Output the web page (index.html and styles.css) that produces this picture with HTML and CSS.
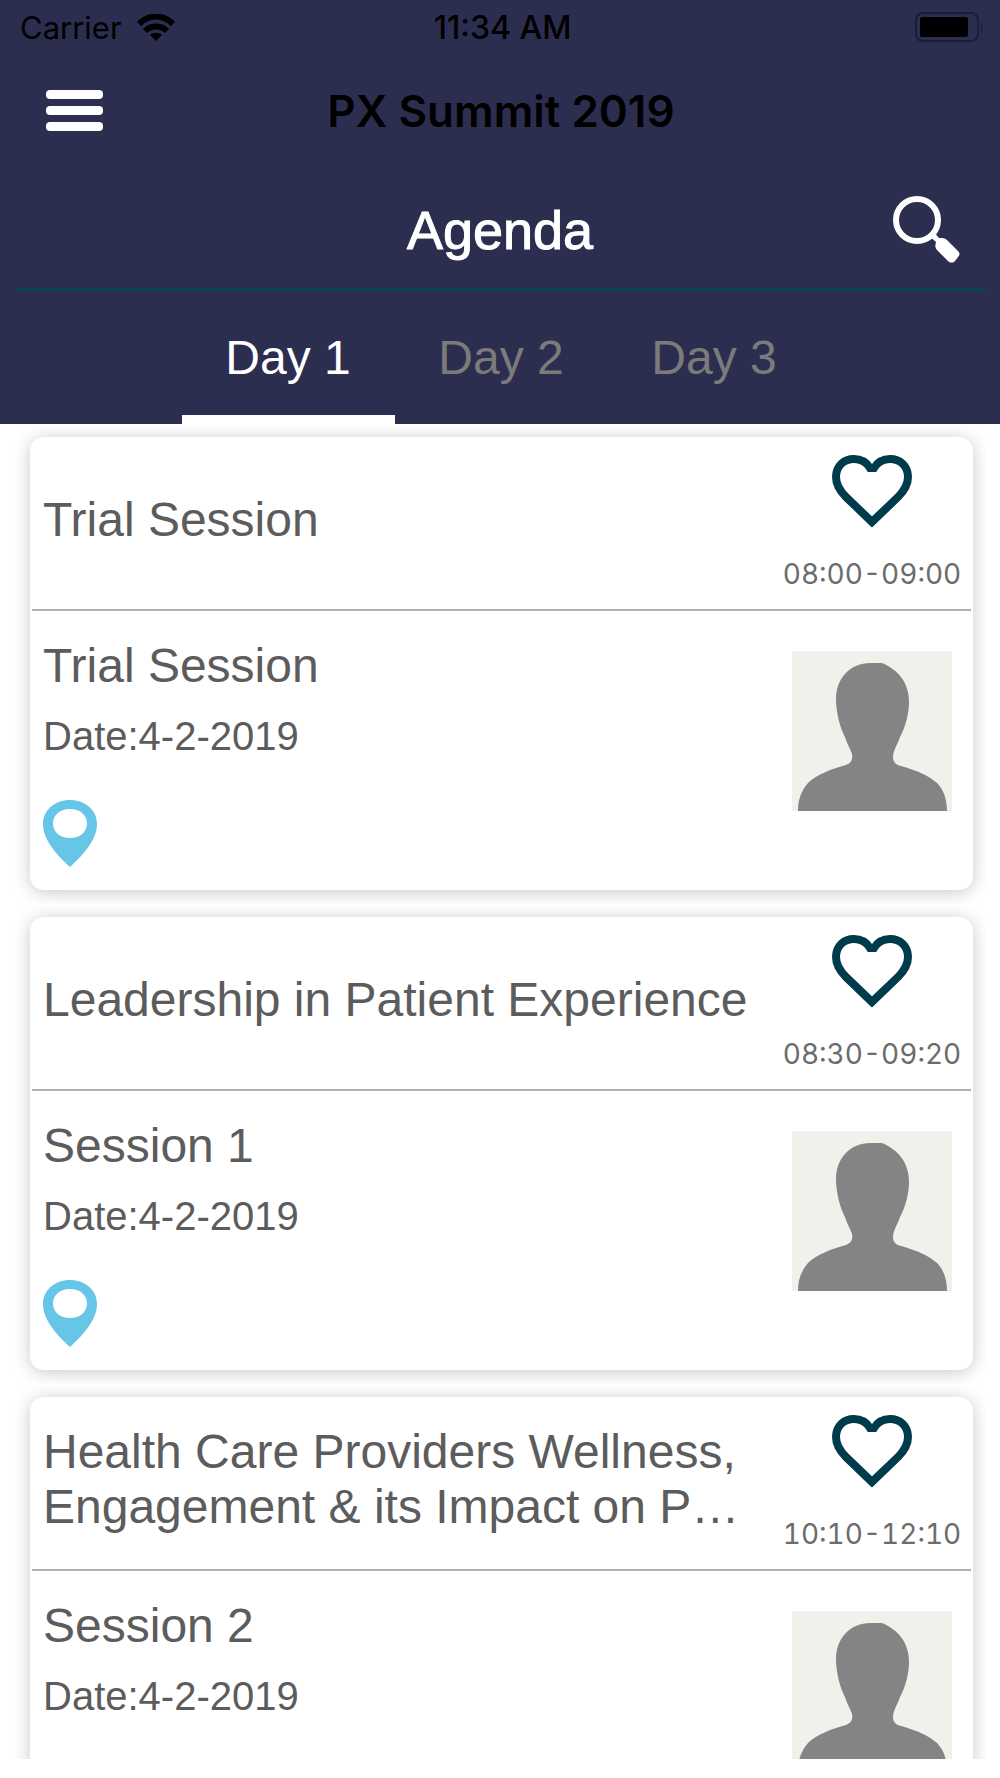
FILE: index.html
```html
<!DOCTYPE html>
<html lang="en">

<head>
    <meta charset="utf-8">
    <meta name="viewport" content="width=device-width, initial-scale=1">
    <title>PX Summit 2019</title>
    <link rel="stylesheet" href="styles.css">
</head>

<body>

    <!-- shapes shared by every session -->
    <svg class="shapes" aria-hidden="true">
        <symbol id="heart" viewBox="0 0 80 73">
            <path d="M40 67 L14 42 C7 35 4 29 4 22 C4 11 12 4 22 4 C30 4 35 8 38 13 L42 13 C45 8 50 4 58 4 C68 4 76 11 76 22 C76 29 73 35 66 42 Z" fill="none" stroke="#003a4d" stroke-width="8"/>
        </symbol>
        <symbol id="pin" viewBox="0 0 54 67">
            <path fill-rule="evenodd" d="M27 0 C42 0 54 10 54 24 C54 40 40 55 27 67 C14 55 0 40 0 24 C0 10 12 0 27 0 Z M27 9 C17 9 10 15 10 23.500 C10 32 17 38 27 38 C37 38 44 32 44 23.500 C44 15 37 9 27 9 Z" fill="#67c6e7"/>
        </symbol>
        <symbol id="person" viewBox="0 0 160 160">
            <rect width="160" height="160" fill="#f1f0eb"/>
            <path d="M80 12 L90 12 C106 19 117 31 117 51 C117 61 114 75 108 86 C106 93 101 99 101 106 C101 111 104 114 109 115 C126 120 136 124 145 132 C152 139 155 149 155 160 L6 160 C6 149 9 140 16 132 C25 123 40 118 54 114 C59 112 61 109 60 103 C59 99 55 93 53 86 C48 77 44 61 44 48 C44 26 60 11 80 12 Z" fill="#848484"/>
        </symbol>
    </svg>

    <header class="header">
        <div class="statusbar">
            <div class="carrier">
                <span>Carrier</span>
                <svg class="wifi" viewBox="0 0 38 27" aria-hidden="true">
                    <path d="M2 10 C12 0 26 0 36 10" fill="none" stroke="#000" stroke-width="6"/>
                    <path d="M8 17 C14 11 24 11 30 17" fill="none" stroke="#000" stroke-width="6"/>
                    <path d="M19 27 L13 21 C16 18 22 18 25 21 Z"/>
                </svg>
            </div>
            <span class="clock">11:34 AM</span>
            <svg class="battery" viewBox="0 0 70 30" aria-hidden="true">
                <rect x="1" y="1" width="62" height="28" rx="7" fill="none" stroke="#1b1c35" stroke-width="2"/>
                <rect x="5" y="5" width="48" height="20" rx="2"/>
                <path d="M66 10 Q69 15 66 21 Z" fill="#1b1c35"/>
            </svg>
        </div>

        <div class="titlebar">
            <button class="menu" type="button" aria-label="Menu">
                <span></span>
                <span></span>
                <span></span>
            </button>
            <h1 class="title">PX Summit 2019</h1>
        </div>

        <div class="pagebar">
            <h2 class="page">Agenda</h2>
            <button class="search" type="button" aria-label="Search">
                <svg viewBox="0 0 67 67" aria-hidden="true">
                    <circle cx="24" cy="24" r="21" fill="none" stroke="#fff" stroke-width="6"/>
                    <path d="M36 40 L41 36 L46 42 C49 42 52 42 54 44 L65 55 C67 57 67 59 65 61 L62 65 C60 67 57 67 55 65 L44 54 C42 52 42 50 43 46 Z" fill="#fff"/>
                </svg>
            </button>
        </div>

        <nav class="tabs">
            <a class="tab active" href="#day1">Day 1</a>
            <a class="tab" href="#day2">Day 2</a>
            <a class="tab" href="#day3">Day 3</a>
        </nav>
    </header>

    <main class="list" id="day1">
        <section class="cell">
            <article class="card">
                <div class="top">
                    <h3 class="name">Trial Session</h3>
                    <div class="side">
                        <button class="fav" type="button" aria-label="Favourite"><svg><use href="#heart"/></svg></button>
                        <p class="time">08:00-09:00</p>
                    </div>
                </div>
                <div class="bottom">
                    <div class="info">
                        <h4 class="session">Trial Session</h4>
                        <p class="date">Date:4-2-2019</p>
                        <button class="place" type="button" aria-label="Location"><svg><use href="#pin"/></svg></button>
                    </div>
                    <div class="side">
                        <svg class="avatar"><use href="#person"/></svg>
                    </div>
                </div>
            </article>
        </section>

        <section class="cell">
            <article class="card">
                <div class="top">
                    <h3 class="name">Leadership in Patient Experience</h3>
                    <div class="side">
                        <button class="fav" type="button" aria-label="Favourite"><svg><use href="#heart"/></svg></button>
                        <p class="time">08:30-09:20</p>
                    </div>
                </div>
                <div class="bottom">
                    <div class="info">
                        <h4 class="session">Session 1</h4>
                        <p class="date">Date:4-2-2019</p>
                        <button class="place" type="button" aria-label="Location"><svg><use href="#pin"/></svg></button>
                    </div>
                    <div class="side">
                        <svg class="avatar"><use href="#person"/></svg>
                    </div>
                </div>
            </article>
        </section>

        <section class="cell">
            <article class="card">
                <div class="top">
                    <h3 class="name">Health Care Providers Wellness, Engagement &amp; its Impact on P…</h3>
                    <div class="side">
                        <button class="fav" type="button" aria-label="Favourite"><svg><use href="#heart"/></svg></button>
                        <p class="time">10:10-12:10</p>
                    </div>
                </div>
                <div class="bottom">
                    <div class="info">
                        <h4 class="session">Session 2</h4>
                        <p class="date">Date:4-2-2019</p>
                        <button class="place" type="button" aria-label="Location"><svg><use href="#pin"/></svg></button>
                    </div>
                    <div class="side">
                        <svg class="avatar"><use href="#person"/></svg>
                    </div>
                </div>
            </article>
        </section>
    </main>

</body>

</html>
```
FILE: styles.css
```css
/* General styles */

* {
    box-sizing: border-box;
}

body {
    display: flex;
    flex-direction: column;
    height: 100vh;
    margin: 0;
    padding-bottom: 19px;
    background-color: white;
    color: #5c5c5c;
    font-family: "Liberation Sans", Arial, sans-serif;
}

h1, h2, h3, h4, p {
    margin: 0;
    font-weight: 400;
}

button {
    padding: 0;
    border: 0;
    background: none;
    cursor: pointer;
}

svg {
    display: block;
}

.shapes {
    position: absolute;
    width: 0;
    height: 0;
}

/* Header */

.header {
    flex: none;
    background-color: #2c2e4f;
}

.statusbar {
    display: grid;
    grid-template-columns: 1fr auto 1fr;
    align-items: center;
    height: 54px;
    padding: 0 15px 0 20px;
    color: black;
    font-family: Inter, sans-serif;
    font-size: 31px;
}

.carrier {
    display: flex;
    align-items: center;
    gap: 15px;
}

.wifi {
    width: 38px;
    height: 27px;
}

.clock {
    font-size: 32px;
    font-weight: 500;
}

.battery {
    justify-self: end;
    width: 70px;
    height: 30px;
}

.titlebar {
    display: grid;
    grid-template-columns: 1fr auto 1fr;
    align-items: center;
    height: 113px;
    padding: 0 44px 0 46px;
}

.menu {
    display: flex;
    flex-direction: column;
    gap: 7px;
    width: 57px;
}

.menu span {
    height: 9px;
    border-radius: 4px;
    background-color: white;
}

.title {
    color: black;
    font-family: Inter, sans-serif;
    font-size: 44px;
    font-weight: 600;
}

.pagebar {
    display: grid;
    grid-template-columns: 1fr auto 1fr;
    align-items: center;
    height: 124px;
    margin: 0 14px 0 16px;
    padding: 4px 26px 0 24px;
    border-bottom: 3px solid #0c4456;
}

.page {
    grid-column: 2;
    color: white;
    font-size: 54px;
    -webkit-text-stroke: 1px white;
}

.search {
    justify-self: end;
}

.search svg {
    width: 67px;
    height: 67px;
}

.tabs {
    display: flex;
    justify-content: center;
    height: 133px;
    padding-left: 2px;
}

.tab {
    display: flex;
    align-items: center;
    justify-content: center;
    width: 213px;
    border-top: 9px solid transparent;
    border-bottom: 9px solid transparent;
    color: #7b7b7b;
    font-size: 48px;
    text-decoration: none;
}

.tab.active {
    border-bottom-color: white;
    color: white;
}

/* Session list */

.list {
    flex: 1;
    min-height: 0;
    margin: 0 14px 0 15px;
    overflow: hidden;
}

.cell {
    padding: 13px 13px 14px 15px;
    overflow: hidden;
}

.card {
    padding: 0 2px;
    border-radius: 14px;
    background-color: white;
    box-shadow: 0 2px 18px rgba(0, 0, 0, 0.22);
}

.top {
    display: flex;
    align-items: center;
    height: 174px;
    padding-left: 11px;
    border-bottom: 2px solid #b0b0b0;
}

.name {
    flex: 1;
    padding-bottom: 8px;
    font-size: 48px;
    line-height: 55px;
}

.side {
    display: flex;
    flex: none;
    flex-direction: column;
    align-items: center;
    width: 198px;
}

.fav svg {
    width: 80px;
    height: 73px;
}

.time {
    margin-top: 28px;
    color: #6c6c6c;
    font-family: Inter, sans-serif;
    font-size: 28px;
    font-variant-numeric: tabular-nums;
    line-height: 36px;
}

.bottom {
    display: flex;
    height: 279px;
    padding: 27px 0 0 11px;
}

.info {
    flex: 1;
}

.session {
    font-size: 48px;
    line-height: 55px;
}

.date {
    margin-top: 20px;
    font-size: 40px;
    line-height: 46px;
}

.place {
    margin-top: 41px;
}

.place svg {
    width: 54px;
    height: 67px;
}

.avatar {
    width: 160px;
    height: 160px;
    margin-top: 13px;
}
```
